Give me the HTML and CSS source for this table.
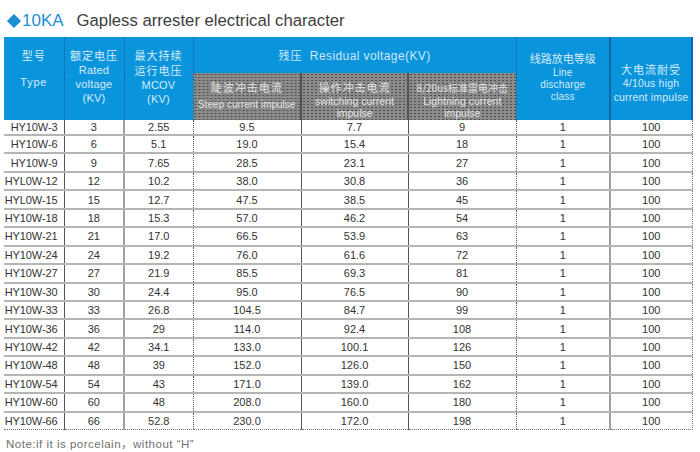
FILE: index.html
```html
<!DOCTYPE html>
<html>
<head>
<meta charset="utf-8">
<link rel="stylesheet" href="styles.css">
</head>
<body>
<div class="page">
  <h1 class="title"><span class="diamond"></span><span class="ka">10KA</span><span class="name">Gapless arrester electrical character</span></h1>
  <table class="spec">
    <colgroup>
      <col class="w1"><col class="w2"><col class="w3"><col class="w4"><col class="w5"><col class="w6"><col class="w7"><col class="w8">
    </colgroup>
    <thead>
      <tr class="h1">
        <th rowspan="2" class="c1"><div class="cn">型号</div><div class="gap">Type</div></th>
        <th rowspan="2" class="c2"><div class="cn">额定电压</div>Rated<br>voltage<br>(KV)</th>
        <th rowspan="2" class="c3"><div class="cn">最大持续</div><div class="cn">运行电压</div>MCOV<br>(KV)</th>
        <th colspan="3" class="c4 res"><span class="cn">残压</span>&nbsp; Residual voltage(KV)</th>
        <th rowspan="2" class="c7 up"><div class="cn">线路放电等级</div>Line<br>discharge<br>class</th>
        <th rowspan="2" class="c8 down"><div class="cn">大电流耐受</div>4/10us high<br>current impulse</th>
      </tr>
      <tr class="h2">
        <th class="sub c4"><div class="cn">陡波冲击电流</div><div class="en one">Steep current impulse</div></th>
        <th class="sub c5"><div class="cn">操作冲击电流</div><div class="en">switching current<br>impulse</div></th>
        <th class="sub c6"><div class="cn sm">8/20us标准雷电冲击</div><div class="en">Lightning current<br>impulse</div></th>
      </tr>
    </thead>
    <tbody>
      <tr class="first"><td class="c1">HY10W-3</td><td class="c2">3</td><td class="c3">2.55</td><td class="c4">9.5</td><td class="c5">7.7</td><td class="c6">9</td><td class="c7">1</td><td class="c8">100</td></tr>
      <tr><td class="c1">HY10W-6</td><td class="c2">6</td><td class="c3">5.1</td><td class="c4">19.0</td><td class="c5">15.4</td><td class="c6">18</td><td class="c7">1</td><td class="c8">100</td></tr>
      <tr><td class="c1">HY10W-9</td><td class="c2">9</td><td class="c3">7.65</td><td class="c4">28.5</td><td class="c5">23.1</td><td class="c6">27</td><td class="c7">1</td><td class="c8">100</td></tr>
      <tr><td class="c1">HYL0W-12</td><td class="c2">12</td><td class="c3">10.2</td><td class="c4">38.0</td><td class="c5">30.8</td><td class="c6">36</td><td class="c7">1</td><td class="c8">100</td></tr>
      <tr><td class="c1">HYL0W-15</td><td class="c2">15</td><td class="c3">12.7</td><td class="c4">47.5</td><td class="c5">38.5</td><td class="c6">45</td><td class="c7">1</td><td class="c8">100</td></tr>
      <tr><td class="c1">HY10W-18</td><td class="c2">18</td><td class="c3">15.3</td><td class="c4">57.0</td><td class="c5">46.2</td><td class="c6">54</td><td class="c7">1</td><td class="c8">100</td></tr>
      <tr><td class="c1">HY10W-21</td><td class="c2">21</td><td class="c3">17.0</td><td class="c4">66.5</td><td class="c5">53.9</td><td class="c6">63</td><td class="c7">1</td><td class="c8">100</td></tr>
      <tr><td class="c1">HY10W-24</td><td class="c2">24</td><td class="c3">19.2</td><td class="c4">76.0</td><td class="c5">61.6</td><td class="c6">72</td><td class="c7">1</td><td class="c8">100</td></tr>
      <tr><td class="c1">HY10W-27</td><td class="c2">27</td><td class="c3">21.9</td><td class="c4">85.5</td><td class="c5">69.3</td><td class="c6">81</td><td class="c7">1</td><td class="c8">100</td></tr>
      <tr><td class="c1">HY10W-30</td><td class="c2">30</td><td class="c3">24.4</td><td class="c4">95.0</td><td class="c5">76.5</td><td class="c6">90</td><td class="c7">1</td><td class="c8">100</td></tr>
      <tr><td class="c1">HY10W-33</td><td class="c2">33</td><td class="c3">26.8</td><td class="c4">104.5</td><td class="c5">84.7</td><td class="c6">99</td><td class="c7">1</td><td class="c8">100</td></tr>
      <tr><td class="c1">HY10W-36</td><td class="c2">36</td><td class="c3">29</td><td class="c4">114.0</td><td class="c5">92.4</td><td class="c6">108</td><td class="c7">1</td><td class="c8">100</td></tr>
      <tr><td class="c1">HY10W-42</td><td class="c2">42</td><td class="c3">34.1</td><td class="c4">133.0</td><td class="c5">100.1</td><td class="c6">126</td><td class="c7">1</td><td class="c8">100</td></tr>
      <tr><td class="c1">HY10W-48</td><td class="c2">48</td><td class="c3">39</td><td class="c4">152.0</td><td class="c5">126.0</td><td class="c6">150</td><td class="c7">1</td><td class="c8">100</td></tr>
      <tr><td class="c1">HY10W-54</td><td class="c2">54</td><td class="c3">43</td><td class="c4">171.0</td><td class="c5">139.0</td><td class="c6">162</td><td class="c7">1</td><td class="c8">100</td></tr>
      <tr><td class="c1">HY10W-60</td><td class="c2">60</td><td class="c3">48</td><td class="c4">208.0</td><td class="c5">160.0</td><td class="c6">180</td><td class="c7">1</td><td class="c8">100</td></tr>
      <tr class="last"><td class="c1">HY10W-66</td><td class="c2">66</td><td class="c3">52.8</td><td class="c4">230.0</td><td class="c5">172.0</td><td class="c6">198</td><td class="c7">1</td><td class="c8">100</td></tr>
    </tbody>
  </table>
  <p class="note">Note:if it is porcelain，without “H”</p>
</div>
</body>
</html>
```
FILE: styles.css
```css
html, body {
  margin: 0;
  padding: 0;
  background: #fff;
}
.page {
  width: 700px;
  height: 452px;
  font-family: "Liberation Sans", "Noto Sans CJK SC", sans-serif;
  overflow: hidden;
}
.title {
  margin: 0;
  height: 37px;
  display: flex;
  align-items: flex-end;
  padding-left: 7px;
  font-weight: normal;
  font-size: 16px;
  line-height: 24px;
  box-sizing: border-box;
  padding-bottom: 4px;
}
.diamond {
  width: 10px;
  height: 10px;
  background: #1b8fd2;
  transform: rotate(45deg);
  margin: 0 3px 7px 2px;
}
.ka {
  color: #1b8fd2;
  font-size: 17px;
  margin-right: 13px;
}
.name {
  color: #3d3d3d;
  font-size: 16.7px;
}
.spec {
  margin-left: 4px;
  border-collapse: collapse;
  table-layout: fixed;
  width: 688px;
}
.w1 { width: 60px; }
.w2 { width: 60px; }
.w3 { width: 69px; }
.w4 { width: 108px; }
.w5 { width: 107px; }
.w6 { width: 108px; }
.w7 { width: 94px; }
.w8 { width: 82px; }

thead th {
  background: #0a94dc;
  color: #d6ecfa;
  font-weight: normal;
  font-size: 11px;
  line-height: 14px;
  padding: 0;
  vertical-align: top;
  letter-spacing: 0.2px;
}
.h1 th {
  height: 36px;
  padding-top: 11px;
}
.h1 th.res {
  padding-top: 0;
  vertical-align: middle;
  font-size: 12px;
  letter-spacing: 0.4px;
  color: #cfe8f8;
}
.h1 th.up {
  padding-top: 14px;
  font-size: 10px;
  line-height: 12px;
}
.h1 th.up .cn { line-height: 14px; margin-bottom: 2px; letter-spacing: 0; }
.h1 th.down {
  padding-top: 25px;
  font-size: 10.5px;
  line-height: 13.5px;
}
.h1 th.down .cn { margin-bottom: 0; }
.cn {
  font-family: "Noto Sans CJK SC", sans-serif;
  font-size: 11px;
  line-height: 15px;
  letter-spacing: 1px;
}
.cn.sm { font-size: 10px; letter-spacing: 0; }
.gap { margin-top: 12px; letter-spacing: 0.8px; }
thead th.c2, thead th.c3, thead th.c4 { border-left: 1px dotted #0a5f95; }
thead th.c7 { border-left: 1px dotted #0a5f95; }
thead th.c8 { border-left: 2px solid #0c6aa6; border-right: 2px solid #0c6aa6; }

.h2 th.sub {
  height: 47px;
  background-color: #8b8b8b;
  background-image: radial-gradient(circle, #4d4d4d 0.7px, transparent 0.9px);
  background-size: 4px 3px;
  color: #e4e4e4;
  padding-top: 7px;
  box-sizing: border-box;
}
.h2 th.sub .en {
  font-size: 10.5px;
  line-height: 12px;
  margin-top: 0;
  letter-spacing: 0;
}
.h2 th.sub .en.one { margin-top: 4px; font-size: 10px; }
.h2 th.c5, .h2 th.c6 { border-left: 2px solid #505050; }

tbody td {
  height: 16.45px;
  padding: 0;
  font-size: 11px;
  color: #333;
  text-align: center;
  border-bottom: 2px solid #b5b5b5;
  line-height: 14px;
  white-space: nowrap;
}
tbody tr.first td { height: 14px; }
tbody tr.last td { border-bottom: 1px dotted #777; }
tbody td.c1 { text-align: right; padding-right: 6px; letter-spacing: -0.1px; }
tbody td.c2 { border-left: 1px solid #555; }
tbody td.c3 { border-left: 2px solid #a0a0a0; }
tbody td.c4 { border-left: 1px dotted #555; }
tbody td.c5, tbody td.c6 { border-left: 1px solid #555; }
tbody td.c7 { border-left: 1px dotted #555; }
tbody td.c8 { border-left: 2px solid #a0a0a0; border-right: 1px dotted #777; }

.note {
  margin: 5px 0 0 6px;
  font-size: 11.5px;
  color: #707070;
  letter-spacing: 0.5px;
}
```
